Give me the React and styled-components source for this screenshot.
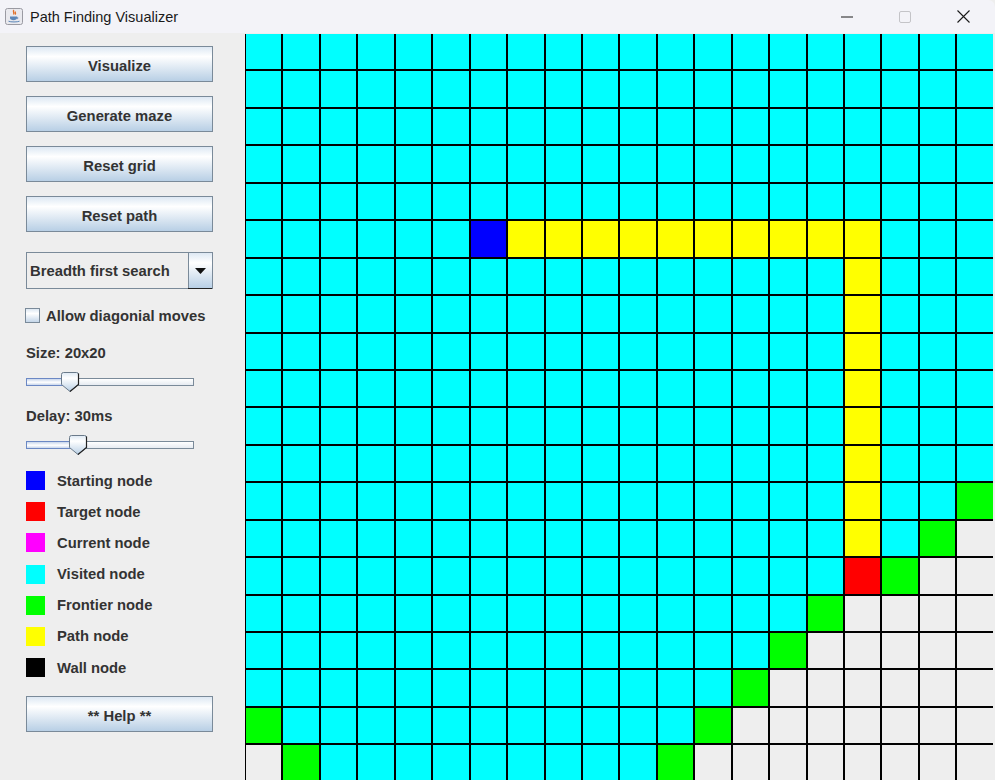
import React from 'react';
import styled, { createGlobalStyle } from 'styled-components';

const GlobalStyle = createGlobalStyle`
  html, body {
    margin: 0;
    padding: 0;
    background: #ffffff;
  }
  #root {
    width: 996px;
    height: 780px;
    overflow: hidden;
  }
`;

const Window = styled.div`
  width: 995px;
  height: 780px;
  display: flex;
  flex-direction: column;
  background: #eeeeee;
  font-family: 'Liberation Sans', Arial, sans-serif;
  overflow: hidden;
`;

const TitleBar = styled.div`
  height: 33px;
  flex-shrink: 0;
  display: flex;
  align-items: center;
  background: #f3f3f8;
  border-top-right-radius: 7px;
`;

const TitleIcon = styled.svg`
  margin-left: 5px;
  width: 18px;
  height: 17px;
`;

const TitleText = styled.span`
  margin-left: 7px;
  font-size: 14.5px;
  color: #1a1a1a;
  flex: 1;
`;

const Controls = styled.div`
  display: flex;
  margin-right: 3px;
  height: 100%;
`;

const ControlBox = styled.div`
  width: 58px;
  height: 100%;
  display: flex;
  align-items: center;
  justify-content: center;
`;

const Body = styled.div`
  flex: 1;
  min-height: 0;
  display: flex;
`;

const Sidebar = styled.div`
  width: 245px;
  flex-shrink: 0;
  box-sizing: border-box;
  padding: 13px 0 0 26px;
  display: flex;
  flex-direction: column;
  color: #333333;
  font-size: 14.8px;
  font-weight: bold;
`;

const ButtonStack = styled.div`
  display: flex;
  flex-direction: column;
  gap: 14px;
`;

const oceanGradient = 'linear-gradient(180deg, #dde8f3 0%, #ffffff 28%, #b8cfe5 100%)';

const Button = styled.div`
  width: 187px;
  height: 36px;
  box-sizing: border-box;
  padding-top: 3px;
  border: 1px solid #7a8a99;
  background: ${oceanGradient};
  display: flex;
  align-items: center;
  justify-content: center;
  margin-top: ${(p) => p.$top || 0}px;
`;

const Combo = styled.div`
  margin-top: 20px;
  width: 187px;
  height: 37px;
  box-sizing: border-box;
  display: flex;
  border: 1px solid #7a8a99;
  background: #eeeeee;
`;

const ComboText = styled.div`
  flex: 1;
  display: flex;
  align-items: center;
  padding-left: 3px;
  white-space: nowrap;
`;

const ComboArrow = styled.div`
  width: 24px;
  box-sizing: border-box;
  border-left: 1px solid #7a8a99;
  background: ${oceanGradient};
  display: flex;
  align-items: center;
  justify-content: center;
  box-shadow: 0 1px 0 #222222;
`;

const CheckRow = styled.label`
  margin-top: 19px;
  margin-left: -1px;
  height: 15px;
  display: flex;
  align-items: center;
  gap: 6px;
  white-space: nowrap;
`;

const CheckBox = styled.span`
  width: 15px;
  height: 15px;
  box-sizing: border-box;
  border: 1px solid #7a8a99;
  background: linear-gradient(180deg, #dde8f3 0%, #ffffff 35%, #c4d6e9 100%);
`;

const Label = styled.div`
  margin-top: ${(p) => p.$top}px;
  height: 18px;
  line-height: 18px;
  white-space: nowrap;
`;

const SliderBox = styled.div`
  position: relative;
  margin-top: 10px;
  width: 168px;
  height: 20px;
`;

const Track = styled.div`
  position: absolute;
  left: 0;
  right: 0;
  top: 6px;
  height: 8px;
  box-sizing: border-box;
  border: 1px solid #7a8a99;
  background: linear-gradient(180deg, #ffffff 0%, #e6ebf1 100%);
`;

const TrackFill = styled.div`
  position: absolute;
  left: 0;
  top: 6px;
  height: 8px;
  box-sizing: border-box;
  border: 1px solid #6b88c4;
  border-right: none;
  background: linear-gradient(180deg, #c8d6ec 0%, #ffffff 55%, #c8d6ec 100%);
`;

const Thumb = styled.svg`
  position: absolute;
  top: 0;
  width: 20px;
  height: 20px;
`;

const Legend = styled.div`
  margin-top: 16px;
  display: flex;
  flex-direction: column;
  gap: 12.2px;
`;

const LegendRow = styled.div`
  height: 19px;
  display: flex;
  align-items: center;
  gap: 12px;
  white-space: nowrap;
`;

const Swatch = styled.span`
  width: 19px;
  height: 19px;
  background: ${(p) => p.$color};
`;

const GridArea = styled.div`
  flex: 1;
  min-width: 0;
  overflow: hidden;
  padding-top: 1px;
  background: #eeeeee;
`;

const Grid = styled.div`
  display: grid;
  grid-template-columns: repeat(20, 35.45px);
  grid-auto-rows: 35.45px;
  gap: 2px;
  padding-left: 1px;
  width: fit-content;
  background: #000000;
`;

const COLORS = {
  v: '#00ffff',
  s: '#0000ff',
  t: '#ff0000',
  p: '#ffff00',
  f: '#00ff00',
  c: '#ff00ff',
  w: '#000000',
  e: '#eeeeee',
};

const Cell = styled.div`
  background: ${(p) => COLORS[p.$kind]};
`;

const ROWS = [
  'vvvvvvvvvvvvvvvvvvvv',
  'vvvvvvvvvvvvvvvvvvvv',
  'vvvvvvvvvvvvvvvvvvvv',
  'vvvvvvvvvvvvvvvvvvvv',
  'vvvvvvvvvvvvvvvvvvvv',
  'vvvvvvsppppppppppvvv',
  'vvvvvvvvvvvvvvvvpvvv',
  'vvvvvvvvvvvvvvvvpvvv',
  'vvvvvvvvvvvvvvvvpvvv',
  'vvvvvvvvvvvvvvvvpvvv',
  'vvvvvvvvvvvvvvvvpvvv',
  'vvvvvvvvvvvvvvvvpvvv',
  'vvvvvvvvvvvvvvvvpvvf',
  'vvvvvvvvvvvvvvvvpvfe',
  'vvvvvvvvvvvvvvvvtfee',
  'vvvvvvvvvvvvvvvfeeee',
  'vvvvvvvvvvvvvvfeeeee',
  'vvvvvvvvvvvvvfeeeeee',
  'fvvvvvvvvvvvfeeeeeee',
  'efvvvvvvvvvfeeeeeeee',
];

const LEGEND = [
  ['Starting node', COLORS.s],
  ['Target node', COLORS.t],
  ['Current node', COLORS.c],
  ['Visited node', COLORS.v],
  ['Frontier node', COLORS.f],
  ['Path node', COLORS.p],
  ['Wall node', COLORS.w],
];

const JavaIcon = () => (
  <TitleIcon viewBox="0 0 18 17">
    <rect x="0.5" y="0.5" width="17" height="16" rx="2" fill="#e9e9ee" stroke="#9a9aa2" />
    <path d="M9 2c-2 1.5 1 2.5-0.5 4.5M10.5 3.5c-1 1 0.8 1.6-0.3 3" stroke="#e0702a" strokeWidth="1.3" fill="none" />
    <path d="M5 8.5h7v1.5c0 1.4-1.4 2.2-3.5 2.2S5 11.4 5 10z" fill="#5b86b8" />
    <path d="M12 9.2c1.4 0 1.4 1.6 0 1.6" stroke="#5b86b8" strokeWidth="0.9" fill="none" />
    <path d="M3.5 13.2c2 1 9 1 11 0" stroke="#5b86b8" strokeWidth="1" fill="none" />
  </TitleIcon>
);

const Slider = ({ pos }) => (
  <SliderBox>
    <Track />
    <TrackFill style={{ width: pos + 8 }} />
    <Thumb viewBox="0 0 20 20" style={{ left: pos - 1 }}>
      <defs>
        <linearGradient id="thumbFill" x1="0" y1="0" x2="0" y2="1">
          <stop offset="0" stopColor="#dde8f3" />
          <stop offset="0.3" stopColor="#ffffff" />
          <stop offset="1" stopColor="#b8cfe5" />
        </linearGradient>
      </defs>
      <path d="M1.5 2.5Q1.5 0.5 3.5 0.5H16.5Q18.5 0.5 18.5 2.5V12.5L10 19.5L1.5 12.5Z" fill="url(#thumbFill)" stroke="#6a7a8a" />
      <path d="M18.5 1.5V12.5L10 19.5" stroke="#222222" strokeWidth="1.2" fill="none" />
    </Thumb>
  </SliderBox>
);

const App = () => {
  return (
    <>
      <GlobalStyle />
      <Window>
        <TitleBar>
          <JavaIcon />
          <TitleText>Path Finding Visualizer</TitleText>
          <Controls>
            <ControlBox>
              <svg width="12" height="2" viewBox="0 0 12 2">
                <path d="M0 1H12" stroke="#1a1a1a" strokeWidth="1" />
              </svg>
            </ControlBox>
            <ControlBox>
              <svg width="12" height="12" viewBox="0 0 12 12">
                <rect x="0.5" y="0.5" width="11" height="11" rx="1.5" fill="none" stroke="#c4c4c8" />
              </svg>
            </ControlBox>
            <ControlBox>
              <svg width="13" height="13" viewBox="0 0 13 13">
                <path d="M0.5 0.5L12.5 12.5M12.5 0.5L0.5 12.5" stroke="#1a1a1a" strokeWidth="1.1" />
              </svg>
            </ControlBox>
          </Controls>
        </TitleBar>
        <Body>
          <Sidebar>
            <ButtonStack>
              <Button>Visualize</Button>
              <Button>Generate maze</Button>
              <Button>Reset grid</Button>
              <Button>Reset path</Button>
            </ButtonStack>
            <Combo>
              <ComboText>Breadth first search</ComboText>
              <ComboArrow>
                <svg width="11" height="6" viewBox="0 0 11 6">
                  <path d="M0 0H11L5.5 6Z" fill="#111111" />
                </svg>
              </ComboArrow>
            </Combo>
            <CheckRow>
              <CheckBox />
              Allow diagonial moves
            </CheckRow>
            <Label $top={21}>Size: 20x20</Label>
            <Slider pos={35} />
            <Label $top={15}>Delay: 30ms</Label>
            <Slider pos={43} />
            <Legend>
              {LEGEND.map(([name, color]) => (
                <LegendRow key={name}>
                  <Swatch $color={color} />
                  {name}
                </LegendRow>
              ))}
            </Legend>
            <Button $top={19}>** Help **</Button>
          </Sidebar>
          <GridArea>
            <Grid>
              {ROWS.map((row, r) =>
                row.split('').map((kind, c) => <Cell key={`${r}-${c}`} $kind={kind} />)
              )}
            </Grid>
          </GridArea>
        </Body>
      </Window>
    </>
  );
};

export default App;
